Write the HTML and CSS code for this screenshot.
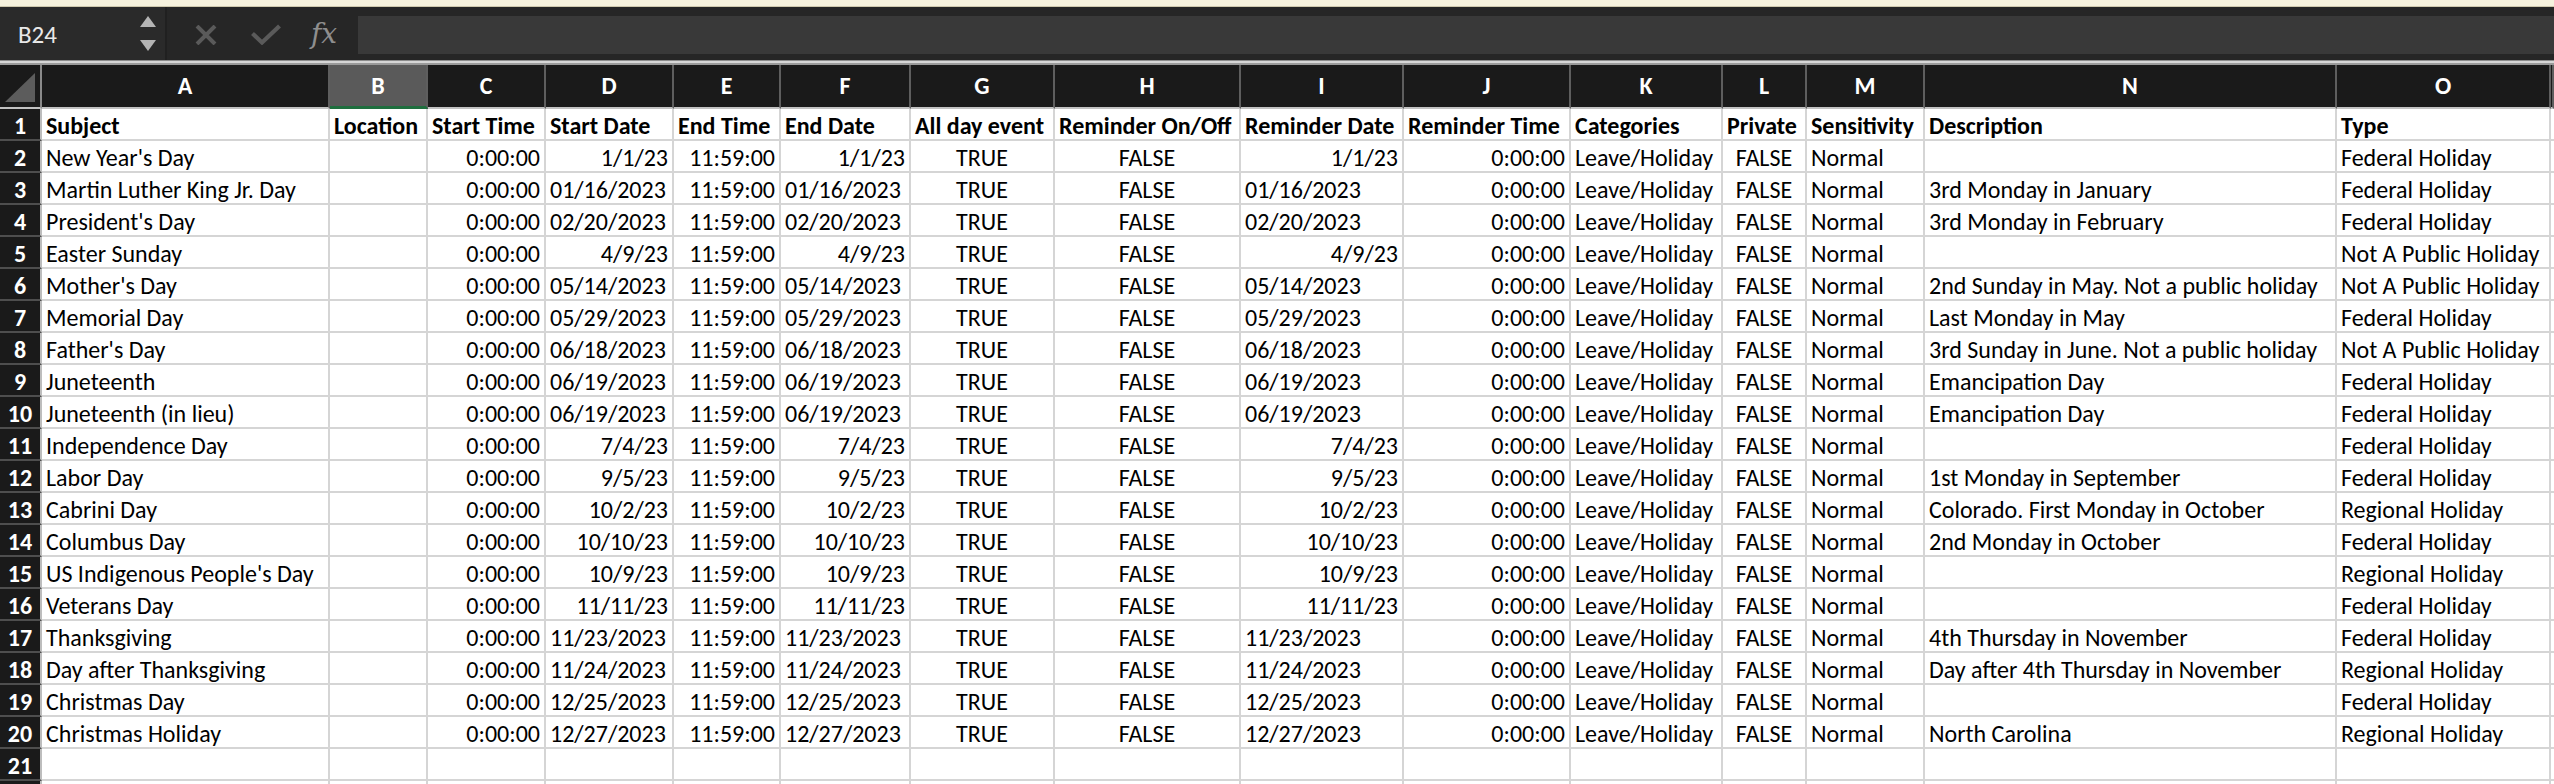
FILE: index.html
```html
<!DOCTYPE html>
<html>
<head>
<meta charset="utf-8">
<link rel="stylesheet" href="styles.css">
</head>
<body>
<div class="topstrip"></div>
<div class="toolbar">
  <div class="namebox">
    <span class="namebox-text">B24</span>
    <svg class="spinner" width="16" height="36" viewBox="0 0 16 36"><polygon points="8,0 16,11 0,11" fill="#b4b4b4"/><polygon points="0,24 16,24 8,35" fill="#b4b4b4"/></svg>
  </div>
  <div class="controls">
    <svg class="ic-x" width="22" height="20" viewBox="0 0 22 20"><path d="M2 1 L20 19 M20 1 L2 19" stroke="#5a5a5a" stroke-width="4" fill="none"/></svg>
    <svg class="ic-check" width="30" height="21" viewBox="0 0 30 21"><path d="M1.5 9.5 L11 18.5 L28.5 2" stroke="#5a5a5a" stroke-width="4.2" fill="none"/></svg>
    <span class="fx">fx</span>
  </div>
  <div class="formula"></div>
</div>
<div class="divider"></div>
<div class="sheet">
  <div class="row hdr">
    <div class="corner"><svg width="32" height="32" viewBox="0 0 32 32"><polygon points="1,30 31,1 31,30" fill="#5c5c5c"/></svg></div>
    <div>A</div><div class="sel">B</div><div>C</div><div>D</div><div>E</div><div>F</div><div>G</div><div>H</div><div>I</div><div>J</div><div>K</div><div>L</div><div>M</div><div>N</div><div>O</div><div></div>
  </div>
  <div class="row b">
    <div class="rn">1</div><div>Subject</div><div>Location</div><div>Start Time</div><div>Start Date</div><div>End Time</div><div>End Date</div><div>All day event</div><div>Reminder On/Off</div><div>Reminder Date</div><div>Reminder Time</div><div>Categories</div><div>Private</div><div>Sensitivity</div><div>Description</div><div>Type</div><div></div>
  </div>
  <div class="row">
    <div class="rn">2</div><div>New Year's Day</div><div></div><div class="r">0:00:00</div><div class="r">1/1/23</div><div class="r">11:59:00</div><div class="r">1/1/23</div><div class="c">TRUE</div><div class="c">FALSE</div><div class="r">1/1/23</div><div class="r">0:00:00</div><div>Leave/Holiday</div><div class="c">FALSE</div><div>Normal</div><div></div><div>Federal Holiday</div><div></div>
  </div>
  <div class="row">
    <div class="rn">3</div><div>Martin Luther King Jr. Day</div><div></div><div class="r">0:00:00</div><div>01/16/2023</div><div class="r">11:59:00</div><div>01/16/2023</div><div class="c">TRUE</div><div class="c">FALSE</div><div>01/16/2023</div><div class="r">0:00:00</div><div>Leave/Holiday</div><div class="c">FALSE</div><div>Normal</div><div>3rd Monday in January</div><div>Federal Holiday</div><div></div>
  </div>
  <div class="row">
    <div class="rn">4</div><div>President's Day</div><div></div><div class="r">0:00:00</div><div>02/20/2023</div><div class="r">11:59:00</div><div>02/20/2023</div><div class="c">TRUE</div><div class="c">FALSE</div><div>02/20/2023</div><div class="r">0:00:00</div><div>Leave/Holiday</div><div class="c">FALSE</div><div>Normal</div><div>3rd Monday in February</div><div>Federal Holiday</div><div></div>
  </div>
  <div class="row">
    <div class="rn">5</div><div>Easter Sunday</div><div></div><div class="r">0:00:00</div><div class="r">4/9/23</div><div class="r">11:59:00</div><div class="r">4/9/23</div><div class="c">TRUE</div><div class="c">FALSE</div><div class="r">4/9/23</div><div class="r">0:00:00</div><div>Leave/Holiday</div><div class="c">FALSE</div><div>Normal</div><div></div><div>Not A Public Holiday</div><div></div>
  </div>
  <div class="row">
    <div class="rn">6</div><div>Mother's Day</div><div></div><div class="r">0:00:00</div><div>05/14/2023</div><div class="r">11:59:00</div><div>05/14/2023</div><div class="c">TRUE</div><div class="c">FALSE</div><div>05/14/2023</div><div class="r">0:00:00</div><div>Leave/Holiday</div><div class="c">FALSE</div><div>Normal</div><div>2nd Sunday in May. Not a public holiday</div><div>Not A Public Holiday</div><div></div>
  </div>
  <div class="row">
    <div class="rn">7</div><div>Memorial Day</div><div></div><div class="r">0:00:00</div><div>05/29/2023</div><div class="r">11:59:00</div><div>05/29/2023</div><div class="c">TRUE</div><div class="c">FALSE</div><div>05/29/2023</div><div class="r">0:00:00</div><div>Leave/Holiday</div><div class="c">FALSE</div><div>Normal</div><div>Last Monday in May</div><div>Federal Holiday</div><div></div>
  </div>
  <div class="row">
    <div class="rn">8</div><div>Father's Day</div><div></div><div class="r">0:00:00</div><div>06/18/2023</div><div class="r">11:59:00</div><div>06/18/2023</div><div class="c">TRUE</div><div class="c">FALSE</div><div>06/18/2023</div><div class="r">0:00:00</div><div>Leave/Holiday</div><div class="c">FALSE</div><div>Normal</div><div>3rd Sunday in June. Not a public holiday</div><div>Not A Public Holiday</div><div></div>
  </div>
  <div class="row">
    <div class="rn">9</div><div>Juneteenth</div><div></div><div class="r">0:00:00</div><div>06/19/2023</div><div class="r">11:59:00</div><div>06/19/2023</div><div class="c">TRUE</div><div class="c">FALSE</div><div>06/19/2023</div><div class="r">0:00:00</div><div>Leave/Holiday</div><div class="c">FALSE</div><div>Normal</div><div>Emancipation Day</div><div>Federal Holiday</div><div></div>
  </div>
  <div class="row">
    <div class="rn">10</div><div>Juneteenth (in lieu)</div><div></div><div class="r">0:00:00</div><div>06/19/2023</div><div class="r">11:59:00</div><div>06/19/2023</div><div class="c">TRUE</div><div class="c">FALSE</div><div>06/19/2023</div><div class="r">0:00:00</div><div>Leave/Holiday</div><div class="c">FALSE</div><div>Normal</div><div>Emancipation Day</div><div>Federal Holiday</div><div></div>
  </div>
  <div class="row">
    <div class="rn">11</div><div>Independence Day</div><div></div><div class="r">0:00:00</div><div class="r">7/4/23</div><div class="r">11:59:00</div><div class="r">7/4/23</div><div class="c">TRUE</div><div class="c">FALSE</div><div class="r">7/4/23</div><div class="r">0:00:00</div><div>Leave/Holiday</div><div class="c">FALSE</div><div>Normal</div><div></div><div>Federal Holiday</div><div></div>
  </div>
  <div class="row">
    <div class="rn">12</div><div>Labor Day</div><div></div><div class="r">0:00:00</div><div class="r">9/5/23</div><div class="r">11:59:00</div><div class="r">9/5/23</div><div class="c">TRUE</div><div class="c">FALSE</div><div class="r">9/5/23</div><div class="r">0:00:00</div><div>Leave/Holiday</div><div class="c">FALSE</div><div>Normal</div><div>1st Monday in September</div><div>Federal Holiday</div><div></div>
  </div>
  <div class="row">
    <div class="rn">13</div><div>Cabrini Day</div><div></div><div class="r">0:00:00</div><div class="r">10/2/23</div><div class="r">11:59:00</div><div class="r">10/2/23</div><div class="c">TRUE</div><div class="c">FALSE</div><div class="r">10/2/23</div><div class="r">0:00:00</div><div>Leave/Holiday</div><div class="c">FALSE</div><div>Normal</div><div>Colorado. First Monday in October</div><div>Regional Holiday</div><div></div>
  </div>
  <div class="row">
    <div class="rn">14</div><div>Columbus Day</div><div></div><div class="r">0:00:00</div><div class="r">10/10/23</div><div class="r">11:59:00</div><div class="r">10/10/23</div><div class="c">TRUE</div><div class="c">FALSE</div><div class="r">10/10/23</div><div class="r">0:00:00</div><div>Leave/Holiday</div><div class="c">FALSE</div><div>Normal</div><div>2nd Monday in October</div><div>Federal Holiday</div><div></div>
  </div>
  <div class="row">
    <div class="rn">15</div><div>US Indigenous People's Day</div><div></div><div class="r">0:00:00</div><div class="r">10/9/23</div><div class="r">11:59:00</div><div class="r">10/9/23</div><div class="c">TRUE</div><div class="c">FALSE</div><div class="r">10/9/23</div><div class="r">0:00:00</div><div>Leave/Holiday</div><div class="c">FALSE</div><div>Normal</div><div></div><div>Regional Holiday</div><div></div>
  </div>
  <div class="row">
    <div class="rn">16</div><div>Veterans Day</div><div></div><div class="r">0:00:00</div><div class="r">11/11/23</div><div class="r">11:59:00</div><div class="r">11/11/23</div><div class="c">TRUE</div><div class="c">FALSE</div><div class="r">11/11/23</div><div class="r">0:00:00</div><div>Leave/Holiday</div><div class="c">FALSE</div><div>Normal</div><div></div><div>Federal Holiday</div><div></div>
  </div>
  <div class="row">
    <div class="rn">17</div><div>Thanksgiving</div><div></div><div class="r">0:00:00</div><div>11/23/2023</div><div class="r">11:59:00</div><div>11/23/2023</div><div class="c">TRUE</div><div class="c">FALSE</div><div>11/23/2023</div><div class="r">0:00:00</div><div>Leave/Holiday</div><div class="c">FALSE</div><div>Normal</div><div>4th Thursday in November</div><div>Federal Holiday</div><div></div>
  </div>
  <div class="row">
    <div class="rn">18</div><div>Day after Thanksgiving</div><div></div><div class="r">0:00:00</div><div>11/24/2023</div><div class="r">11:59:00</div><div>11/24/2023</div><div class="c">TRUE</div><div class="c">FALSE</div><div>11/24/2023</div><div class="r">0:00:00</div><div>Leave/Holiday</div><div class="c">FALSE</div><div>Normal</div><div>Day after 4th Thursday in November</div><div>Regional Holiday</div><div></div>
  </div>
  <div class="row">
    <div class="rn">19</div><div>Christmas Day</div><div></div><div class="r">0:00:00</div><div>12/25/2023</div><div class="r">11:59:00</div><div>12/25/2023</div><div class="c">TRUE</div><div class="c">FALSE</div><div>12/25/2023</div><div class="r">0:00:00</div><div>Leave/Holiday</div><div class="c">FALSE</div><div>Normal</div><div></div><div>Federal Holiday</div><div></div>
  </div>
  <div class="row">
    <div class="rn">20</div><div>Christmas Holiday</div><div></div><div class="r">0:00:00</div><div>12/27/2023</div><div class="r">11:59:00</div><div>12/27/2023</div><div class="c">TRUE</div><div class="c">FALSE</div><div>12/27/2023</div><div class="r">0:00:00</div><div>Leave/Holiday</div><div class="c">FALSE</div><div>Normal</div><div>North Carolina</div><div>Regional Holiday</div><div></div>
  </div>
  <div class="row">
    <div class="rn">21</div><div></div><div></div><div></div><div></div><div></div><div></div><div></div><div></div><div></div><div></div><div></div><div></div><div></div><div></div><div></div><div></div>
  </div>
  <div class="row">
    <div class="rn"></div><div></div><div></div><div></div><div></div><div></div><div></div><div></div><div></div><div></div><div></div><div></div><div></div><div></div><div></div><div></div><div></div>
  </div>
</div>
</body>
</html>
```
FILE: styles.css
```css
html, body {
  margin: 0;
  padding: 0;
  background: #ffffff;
  overflow: hidden;
}
body {
  width: 2554px;
  height: 784px;
  font-family: Carlito, Calibri, Lato, "Liberation Sans", sans-serif;
}
.topstrip {
  height: 6px;
  background: #f6f2de;
  border-bottom: 1px solid #cfc9ae;
}
.toolbar {
  height: 53px;
  background: #262626;
  display: flex;
  align-items: stretch;
}
.namebox {
  background: #2a2a2a;
  border-right: 2px solid #202020;
  display: flex;
  align-items: center;
  justify-content: space-between;
  padding: 0 9px 0 18px;
  box-sizing: border-box;
  width: 167px;
}
.namebox-text {
  color: #e8e8e8;
  font-size: 25px;
  padding-top: 2px;
}
.spinner {
  display: block;
}
.controls {
  width: 191px;
  display: flex;
  align-items: center;
  box-sizing: border-box;
  padding-left: 28px;
}
.ic-x { margin-top: 2px; }
.ic-check { margin-left: 34px; margin-top: 2px; }
.fx {
  margin-left: 30px;
  color: #8e8e8e;
  font-family: "DejaVu Serif", "Liberation Serif", serif;
  font-style: italic;
  font-size: 28px;
}
.formula {
  flex: 1;
  margin: 9px 0 6px 0;
  background: #393939;
}
.divider {
  height: 5px;
  box-sizing: border-box;
  background: #d6d6d6;
  border-top: 1px solid #8c8c8c;
  border-bottom: 2px solid #9a9a9a;
}
.sheet {
  font-size: 24px;
  color: #000;
}
.row {
  display: grid;
  grid-template-columns: 42px 288px 98px 118px 128px 107px 130px 144px 186px 163px 167px 152px 84px 118px 412px 214px 1fr;
  height: 32px;
}
.row > div {
  box-sizing: border-box;
  border-right: 2px solid #d5d5d5;
  border-bottom: 2px solid #d5d5d5;
  white-space: nowrap;
  overflow: hidden;
  line-height: 31px;
  padding: 1px 4px 0 4px;
}
.row > .r { text-align: right; }
.row > .c { text-align: center; }
.row.b > div { font-weight: bold; }
.row > .rn {
  background: #1a1a1a;
  color: #ffffff;
  font-weight: bold;
  text-align: center;
  padding: 1px 0 0 0;
  border-right: 2px solid #bdbdbd;
  border-bottom: 2px solid #4e4e4e;
}
.row.hdr {
  height: 44px;
}
.row.hdr > div {
  background: #1a1a1a;
  color: #ffffff;
  font-weight: bold;
  text-align: center;
  line-height: 41px;
  padding: 0;
  border-right: 2px solid #5e5e5e;
  border-bottom: 2px solid #c2c2c2;
}
.row.hdr > .sel {
  background: #5a5a5a;
  border-bottom: 3px solid #1f6e3e;
}
.row.hdr > .corner {
  border-right: 2px solid #8a8a8a;
  display: flex;
  align-items: flex-end;
  justify-content: flex-end;
  padding: 0 4px 3px 0;
}
.corner svg { display: block; }
```
